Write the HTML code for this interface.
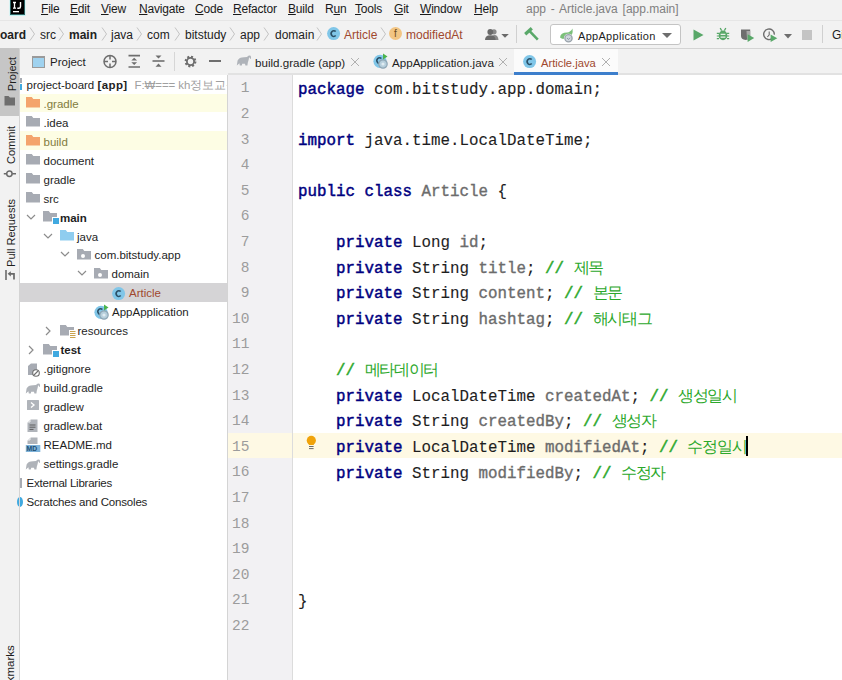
<!DOCTYPE html>
<html><head><meta charset="utf-8">
<style>
*{margin:0;padding:0;box-sizing:border-box}
html,body{width:842px;height:680px;overflow:hidden;background:#fff;font-family:"Liberation Sans",sans-serif;font-size:12px;color:#000}
.a{position:absolute;white-space:nowrap}
#menubar{position:absolute;left:0;top:0;width:842px;height:21px;background:#f2f2f2;border-bottom:1px solid #e6e6e6}
#navbar{position:absolute;left:0;top:21px;width:842px;height:28px;background:#f2f2f2;border-bottom:1px solid #d4d4d4}
#stripe{position:absolute;left:0;top:49px;width:20px;height:631px;background:#f2f2f2;border-right:1px solid #d4d4d4}
#phead{position:absolute;left:20px;top:49px;width:208px;height:26px;background:#f2f2f2}
#tree{position:absolute;left:20px;top:75px;width:208px;height:605px;background:#fff;border-right:1px solid #d4d4d4}
#tabs{position:absolute;left:228px;top:49px;width:614px;height:26px;background:#f2f2f2}
#gutter{position:absolute;left:228px;top:75px;width:65px;height:605px;background:#f2f1f3;border-right:1px solid #dcdcdc}
#editor{position:absolute;left:293px;top:75px;width:549px;height:605px;background:#fff}
#clip{position:absolute;left:0;top:75px;width:227px;height:605px;overflow:hidden}
.mn{font-size:12px;color:#1a1a1a;top:2px;line-height:14px;letter-spacing:-0.2px}
.bc{font-size:12px;color:#222;top:28px;line-height:14px}
.code{position:absolute;left:298px;font-family:"Liberation Mono",monospace;font-size:15.83px;line-height:25.6px;color:#1e1e1e;white-space:pre;-webkit-text-stroke:0.1px currentColor}
.kw{color:#000080;font-weight:normal;-webkit-text-stroke:0.45px #000080}
.gr{color:#6c6c6c;-webkit-text-stroke:0.35px #6c6c6c}
.cm{color:#2ca82c}
.sl{-webkit-text-stroke:0.5px #2ca82c}
.hg{font-size:16px;letter-spacing:-1.3px;-webkit-text-stroke:0}
.ln{position:absolute;left:228px;width:21.5px;text-align:right;font-family:"Liberation Mono",monospace;font-size:14.5px;line-height:25.6px;color:#9c9c9c}
.tr{position:absolute;font-size:11.5px;line-height:19px;color:#1e1e1e;white-space:nowrap}
.tab{position:absolute;top:50px;height:26px;font-size:11.6px;line-height:26px;color:#1e1e1e;white-space:nowrap}
</style></head><body>
<div id="menubar"></div><div id="navbar"></div><div id="stripe"></div><div id="phead"></div><div id="tree"></div><div id="tabs"></div><div id="gutter"></div><div id="editor"></div>
<svg class="a" style="left:9px;top:0" width="17" height="17"><rect x="0.5" y="-1" width="16" height="17" fill="#bff3f3"/><rect x="1" y="-1" width="15" height="16" fill="#2e6464"/><rect x="2" y="0" width="13" height="14" fill="#000"/><path d="M4 2.5 H7 M4 8.2 H7 M5.5 2.5 V8.2" stroke="#fff" stroke-width="1.3"/><path d="M11.5 2 V6.5 Q11.5 8.3 9.8 8.3 H8.3" fill="none" stroke="#fff" stroke-width="1.4"/><rect x="4" y="11" width="6" height="1.3" fill="#fff"/></svg>
<div class="a mn" style="left:41px"><u>F</u>ile</div>
<div class="a mn" style="left:70px"><u>E</u>dit</div>
<div class="a mn" style="left:101px"><u>V</u>iew</div>
<div class="a mn" style="left:139px"><u>N</u>avigate</div>
<div class="a mn" style="left:195px"><u>C</u>ode</div>
<div class="a mn" style="left:233px"><u>R</u>efactor</div>
<div class="a mn" style="left:288px"><u>B</u>uild</div>
<div class="a mn" style="left:325px">R<u>u</u>n</div>
<div class="a mn" style="left:355px"><u>T</u>ools</div>
<div class="a mn" style="left:394px"><u>G</u>it</div>
<div class="a mn" style="left:420px"><u>W</u>indow</div>
<div class="a mn" style="left:474px"><u>H</u>elp</div>
<div class="a mn" style="left:526px;color:#808080;word-spacing:1.5px;letter-spacing:0">app - Article.java [app.main]</div>
<div class="a bc" style="left:0px"><b>oard</b></div>
<svg class="a" style="left:29px;top:26px" width="7" height="16"><path d="M1 1.5 L5.5 8 L1 14.5" fill="none" stroke="#c4c4c4" stroke-width="1"/></svg>
<div class="a bc" style="left:40px">src</div>
<svg class="a" style="left:58px;top:26px" width="7" height="16"><path d="M1 1.5 L5.5 8 L1 14.5" fill="none" stroke="#c4c4c4" stroke-width="1"/></svg>
<div class="a bc" style="left:69px"><b>main</b></div>
<svg class="a" style="left:101px;top:26px" width="7" height="16"><path d="M1 1.5 L5.5 8 L1 14.5" fill="none" stroke="#c4c4c4" stroke-width="1"/></svg>
<div class="a bc" style="left:111px">java</div>
<svg class="a" style="left:136px;top:26px" width="7" height="16"><path d="M1 1.5 L5.5 8 L1 14.5" fill="none" stroke="#c4c4c4" stroke-width="1"/></svg>
<div class="a bc" style="left:147px">com</div>
<svg class="a" style="left:174px;top:26px" width="7" height="16"><path d="M1 1.5 L5.5 8 L1 14.5" fill="none" stroke="#c4c4c4" stroke-width="1"/></svg>
<div class="a bc" style="left:185px">bitstudy</div>
<svg class="a" style="left:229px;top:26px" width="7" height="16"><path d="M1 1.5 L5.5 8 L1 14.5" fill="none" stroke="#c4c4c4" stroke-width="1"/></svg>
<div class="a bc" style="left:240px">app</div>
<svg class="a" style="left:263px;top:26px" width="7" height="16"><path d="M1 1.5 L5.5 8 L1 14.5" fill="none" stroke="#c4c4c4" stroke-width="1"/></svg>
<div class="a bc" style="left:275px">domain</div>
<svg class="a" style="left:316px;top:26px" width="7" height="16"><path d="M1 1.5 L5.5 8 L1 14.5" fill="none" stroke="#c4c4c4" stroke-width="1"/></svg>
<svg class="a" style="left:327px;top:27px" width="14" height="14"><circle cx="6.6" cy="6.6" r="6.5" fill="#80c6e8"/><path d="M8.7 4.6 A2.6 2.9 0 1 0 8.7 8.6" fill="none" stroke="#2b4f66" stroke-width="1.6"/></svg>
<div class="a bc" style="left:344px;color:#a0482e">Article</div>
<svg class="a" style="left:380px;top:26px" width="7" height="16"><path d="M1 1.5 L5.5 8 L1 14.5" fill="none" stroke="#c4c4c4" stroke-width="1"/></svg>
<div class="a" style="left:389px;top:27px;width:13px;height:13px;border-radius:50%;background:#f2c583"></div>
<div class="a" style="left:392px;top:27px;font-size:10px;line-height:13px;color:#6b4b1a;width:7px;text-align:center">f</div>
<div class="a bc" style="left:406px;color:#a0482e">modifiedAt</div>
<svg class="a" style="left:482px;top:26px" width="28" height="16"><circle cx="12" cy="5.8" r="2.6" fill="#8a8a8a"/><path d="M9 14 Q9 9 12.5 9 Q16 9 16.5 14 Z" fill="#8a8a8a"/><circle cx="8.3" cy="6" r="2.9" fill="#6a6a6a"/><path d="M3 14 Q3 9.2 8.3 9.2 Q13.6 9.2 13.6 14 Z" fill="#6a6a6a"/><path d="M19.3 8 L26.8 8 L23 11.8 Z" fill="#6a6a6a"/></svg>
<div class="a" style="left:516px;top:25px;width:1px;height:18px;background:#d0d0d0"></div>
<svg class="a" style="left:522px;top:26px" width="18" height="16"><path d="M3.2 8.2 L9.8 2.2" stroke="#59a869" stroke-width="3.2"/><path d="M7.6 5.2 L15.8 13.6" stroke="#59a869" stroke-width="2.6"/></svg>
<div class="a" style="left:550px;top:24px;width:131px;height:21px;background:#fff;border:1px solid #c4c4c4;border-radius:3px"></div>
<svg class="a" style="left:559px;top:28px" width="17" height="16"><path d="M1 9.5 Q1.5 4.5 8 4.5 Q11.5 4.2 13.5 0.5 Q14.5 7 10 9.5 Q5 12.5 1 9.5 Z" fill="#7cc07a"/><circle cx="9.5" cy="10.3" r="4.6" fill="#fff"/><circle cx="9.5" cy="10.3" r="3.6" fill="#cfd6dd" stroke="#9aa3ab" stroke-width="1.3"/><path d="M8 10 L9.5 11.5 L11 9.8" fill="none" stroke="#8a949c" stroke-width="0.9"/></svg>
<div class="a bc" style="left:578px;top:29px;font-size:11px;letter-spacing:0.3px;color:#1e1e1e">AppApplication</div>
<svg class="a" style="left:662px;top:33px" width="11" height="6"><path d="M0 0 L10 0 L5 5 Z" fill="#6e6e6e"/></svg>
<svg class="a" style="left:693px;top:29px" width="11" height="12"><path d="M0.5 0.5 L10.5 6 L0.5 11.5 Z" fill="#59a869"/></svg>
<svg class="a" style="left:716px;top:27px" width="14" height="14"><path d="M4.2 1 L5.6 3.6 M9.8 1 L8.4 3.6" stroke="#59a869" stroke-width="1.3"/><ellipse cx="7" cy="8.4" rx="4.3" ry="4.9" fill="#59a869"/><path d="M0.8 6.4 H3 M0.8 9 H3 M0.8 11.6 H3 M11 6.4 H13.2 M11 9 H13.2 M11 11.6 H13.2" stroke="#59a869" stroke-width="1.2"/><path d="M4.6 7.3 H9.4 M4.6 10.2 H9.4" stroke="#e6f2e8" stroke-width="1.2"/></svg>
<svg class="a" style="left:740px;top:28px" width="16" height="15"><path d="M1 1.4 L10.2 1.4 L10.2 8 Q10.2 11.3 5.6 12 Q1 11.3 1 8 Z" fill="#6e6e6e"/><path d="M6.5 3 L10.2 3 L10.2 8 Q10.2 10.5 7 11.3 Z" fill="#a8a8a8"/><path d="M7.6 6.2 L14.2 10 L7.6 13.9 Z" fill="#59a869"/></svg>
<svg class="a" style="left:762px;top:28px" width="17" height="15"><path d="M10.5 10.3 A5.3 5.3 0 1 1 12.3 6.6" fill="none" stroke="#6e6e6e" stroke-width="1.4"/><path d="M7.2 3.4 L7.2 6.8 L5.4 9" fill="none" stroke="#6e6e6e" stroke-width="1.1"/><path d="M8.6 6.6 L15.3 10.3 L8.6 14 Z" fill="#59a869"/></svg>
<svg class="a" style="left:784px;top:34px" width="9" height="5"><path d="M0 0 L8 0 L4 4.5 Z" fill="#6e6e6e"/></svg>
<div class="a" style="left:802px;top:30px;width:10px;height:10px;background:#c4c4c4"></div>
<div class="a" style="left:822px;top:25px;width:1px;height:18px;background:#d0d0d0"></div>
<div class="a bc" style="left:832px;color:#1e1e1e">Gi</div>
<div class="a" style="left:0;top:48px;width:19px;height:68px;background:#c6c6c6"></div>
<div class="a" style="left:11.5px;top:74px;width:0;height:0"><div style="position:absolute;left:0;top:0;transform:translate(-50%,-50%) rotate(-90deg);font-size:11px;line-height:12px;color:#1e1e1e;white-space:nowrap">Project</div></div>
<svg class="a" style="left:4px;top:95px" width="12" height="11"><path d="M0.5 1 L4.5 1 L6 2.5 L11 2.5 L11 10.5 L0.5 10.5 Z" fill="#6e6e6e"/></svg>
<div class="a" style="left:11px;top:145px;width:0;height:0"><div style="position:absolute;left:0;top:0;transform:translate(-50%,-50%) rotate(-90deg);font-size:11px;line-height:12px;color:#1e1e1e;white-space:nowrap">Commit</div></div>
<svg class="a" style="left:3px;top:169px" width="14" height="10"><circle cx="6.4" cy="4.8" r="2.7" fill="none" stroke="#6a6a6a" stroke-width="1.5"/><path d="M0.8 4.8 L3.6 4.8 M9.2 4.8 L13 4.8" stroke="#6a6a6a" stroke-width="1.5"/></svg>
<div class="a" style="left:11px;top:232.5px;width:0;height:0"><div style="position:absolute;left:0;top:0;transform:translate(-50%,-50%) rotate(-90deg);font-size:11px;line-height:12px;color:#1e1e1e;white-space:nowrap">Pull Requests</div></div>
<svg class="a" style="left:4px;top:269px" width="12" height="12"><path d="M2 1 L2 11" stroke="#6a6a6a" stroke-width="1.6"/><path d="M5.5 4.8 L10 4.8 L10 10.5" fill="none" stroke="#6a6a6a" stroke-width="1.7"/><path d="M3.6 4.8 L6.8 2.2 L6.8 7.4 Z" fill="#6a6a6a"/></svg>
<div class="a" style="left:10px;top:674px;width:0;height:0"><div style="position:absolute;left:0;top:0;transform:translate(-50%,-50%) rotate(-90deg);font-size:11.5px;line-height:12px;color:#1e1e1e;white-space:nowrap">Bookmarks</div></div>
<div class="a" style="left:32px;top:56px;width:13px;height:12px;border:1px solid #9a9a9a;border-top-width:2px;background:#9fd2ef"></div>
<div class="a" style="left:50px;top:54px;font-size:11.5px;line-height:16px;color:#1e1e1e">Project</div>
<svg class="a" style="left:102px;top:54px" width="16" height="15"><circle cx="8" cy="7.5" r="6" fill="none" stroke="#6e6e6e" stroke-width="1.5"/><path d="M8 1.5 L8 5.5 M8 9.5 L8 13.5 M2 7.5 L6 7.5 M10 7.5 L14 7.5" stroke="#6e6e6e" stroke-width="1.5"/></svg>
<svg class="a" style="left:128px;top:54px" width="13" height="15"><path d="M0.5 1.6 L12 1.6 M0.5 13 L12 13" stroke="#6e6e6e" stroke-width="1.6"/><path d="M3.3 6.6 L6.2 3.8 L9.1 6.6 Z M3.3 8.2 L6.2 11 L9.1 8.2 Z" fill="#6e6e6e"/></svg>
<svg class="a" style="left:152px;top:54px" width="13" height="15"><path d="M0.5 7 L12.5 7" stroke="#6e6e6e" stroke-width="1.6"/><path d="M3.5 1.4 L6.5 4.4 L9.5 1.4 Z M3.5 12.8 L6.5 9.6 L9.5 12.8 Z" fill="#6e6e6e"/></svg>
<div class="a" style="left:174px;top:52px;width:1px;height:19px;background:#d6d6d6"></div>
<svg class="a" style="left:184px;top:55px" width="13" height="13"><circle cx="6.5" cy="6.5" r="4.6" fill="none" stroke="#6e6e6e" stroke-width="2.6" stroke-dasharray="1.9 1.7"/><circle cx="6.5" cy="6.5" r="3.6" fill="none" stroke="#6e6e6e" stroke-width="1.8"/></svg>
<div class="a" style="left:209px;top:60px;width:12px;height:2px;background:#6e6e6e"></div>
<div id="clip"><div style="position:absolute;left:0;top:-75px;width:227px;height:680px">
<div class="a" style="left:20px;top:93.55px;width:207px;height:18.7px;background:#fdfde4"></div>
<div class="a" style="left:20px;top:131.45px;width:207px;height:18.7px;background:#fdfde4"></div>
<div class="a" style="left:20px;top:283.05px;width:207px;height:18.7px;background:#d5d4d6"></div>
<div class="tr" style="left:26.5px;top:75.90px;color:#1e1e1e">project-board <b style="letter-spacing:0.4px">[app]</b><span style="color:#a0a0a0;margin-left:7px;letter-spacing:-0.1px">F:&#8361;=== kh정보교육</span></div>
<div class="tr" style="left:43.5px;top:94.85px;color:#827c40">.gradle</div>
<div class="tr" style="left:43.5px;top:113.80px;color:#1e1e1e">.idea</div>
<div class="tr" style="left:43.5px;top:132.75px;color:#827c40">build</div>
<div class="tr" style="left:43.5px;top:151.70px;color:#1e1e1e">document</div>
<div class="tr" style="left:43.5px;top:170.65px;color:#1e1e1e">gradle</div>
<div class="tr" style="left:43.5px;top:189.60px;color:#1e1e1e">src</div>
<div class="tr" style="left:60px;top:208.55px;color:#1e1e1e"><b>main</b></div>
<div class="tr" style="left:77px;top:227.50px;color:#1e1e1e">java</div>
<div class="tr" style="left:94.5px;top:246.45px;color:#1e1e1e">com.bitstudy.app</div>
<div class="tr" style="left:111.5px;top:265.40px;color:#1e1e1e">domain</div>
<div class="tr" style="left:129px;top:284.35px;color:#a0482e">Article</div>
<div class="tr" style="left:112px;top:303.30px;color:#1e1e1e">AppApplication</div>
<div class="tr" style="left:77.5px;top:322.25px;color:#1e1e1e">resources</div>
<div class="tr" style="left:60.5px;top:341.20px;color:#1e1e1e"><b>test</b></div>
<div class="tr" style="left:43.5px;top:360.15px;color:#1e1e1e">.gitignore</div>
<div class="tr" style="left:43.5px;top:379.10px;color:#1e1e1e">build.gradle</div>
<div class="tr" style="left:43.5px;top:398.05px;color:#1e1e1e">gradlew</div>
<div class="tr" style="left:43.5px;top:417.00px;color:#1e1e1e">gradlew.bat</div>
<div class="tr" style="left:43.5px;top:435.95px;color:#1e1e1e">README.md</div>
<div class="tr" style="left:43.5px;top:454.90px;color:#1e1e1e">settings.gradle</div>
<div class="tr" style="left:26.5px;top:473.85px;color:#1e1e1e"><span style="letter-spacing:-0.22px">External Libraries</span></div>
<div class="tr" style="left:26.5px;top:492.80px;color:#1e1e1e"><span style="letter-spacing:-0.18px">Scratches and Consoles</span></div>
<div class="a" style="left:19px;top:78.4px;width:3px;height:5px;background:#a7abb3"></div><div class="a" style="left:19px;top:84.4px;width:3px;height:6px;background:#40a9e0"></div>
<svg class="a" style="left:26px;top:97.4px" width="15" height="12"><path d="M0 0 L5.8 0 L7.3 2 L14 2 L14 10.5 L0 10.5 Z" fill="#f4a46c"/></svg>
<svg class="a" style="left:26px;top:116.3px" width="15" height="12"><path d="M0 0 L5.8 0 L7.3 2 L14 2 L14 10.5 L0 10.5 Z" fill="#a7abb3"/></svg>
<svg class="a" style="left:26px;top:135.2px" width="15" height="12"><path d="M0 0 L5.8 0 L7.3 2 L14 2 L14 10.5 L0 10.5 Z" fill="#f4a46c"/></svg>
<svg class="a" style="left:26px;top:154.2px" width="15" height="12"><path d="M0 0 L5.8 0 L7.3 2 L14 2 L14 10.5 L0 10.5 Z" fill="#a7abb3"/></svg>
<svg class="a" style="left:26px;top:173.2px" width="15" height="12"><path d="M0 0 L5.8 0 L7.3 2 L14 2 L14 10.5 L0 10.5 Z" fill="#a7abb3"/></svg>
<svg class="a" style="left:26px;top:192.1px" width="15" height="12"><path d="M0 0 L5.8 0 L7.3 2 L14 2 L14 10.5 L0 10.5 Z" fill="#a7abb3"/></svg>
<svg class="a" style="left:26px;top:213.6px" width="10" height="7"><path d="M1 1 L5 5 L9 1" fill="none" stroke="#8c8c8c" stroke-width="1.2"/></svg>
<svg class="a" style="left:43px;top:211.1px" width="15" height="12"><path d="M0 0 L5.8 0 L7.3 2 L14 2 L14 10.5 L0 10.5 Z" fill="#a7abb3"/></svg>
<div class="a" style="left:51.5px;top:217.1px;width:6px;height:6px;background:#40a9e0;border:1px solid #fff;border-right:none;border-bottom:none;box-sizing:content-box"></div>
<svg class="a" style="left:43px;top:232.5px" width="10" height="7"><path d="M1 1 L5 5 L9 1" fill="none" stroke="#8c8c8c" stroke-width="1.2"/></svg>
<svg class="a" style="left:60px;top:230.0px" width="15" height="12"><path d="M0 0 L5.8 0 L7.3 2 L14 2 L14 10.5 L0 10.5 Z" fill="#8fcdef"/></svg>
<svg class="a" style="left:60px;top:251.4px" width="10" height="7"><path d="M1 1 L5 5 L9 1" fill="none" stroke="#8c8c8c" stroke-width="1.2"/></svg>
<svg class="a" style="left:77px;top:248.9px" width="15" height="12"><path d="M0 0 L5.8 0 L7.3 2 L14 2 L14 10.5 L0 10.5 Z" fill="#a7abb3"/></svg>
<div class="a" style="left:81px;top:253.8px;width:4px;height:4px;background:#fff;border-radius:50%"></div>
<svg class="a" style="left:77px;top:270.4px" width="10" height="7"><path d="M1 1 L5 5 L9 1" fill="none" stroke="#8c8c8c" stroke-width="1.2"/></svg>
<svg class="a" style="left:94px;top:267.9px" width="15" height="12"><path d="M0 0 L5.8 0 L7.3 2 L14 2 L14 10.5 L0 10.5 Z" fill="#a7abb3"/></svg>
<div class="a" style="left:98px;top:272.7px;width:4px;height:4px;background:#fff;border-radius:50%"></div>
<svg class="a" style="left:112px;top:286.9px" width="14" height="14"><circle cx="6.6" cy="6.6" r="6.5" fill="#80c6e8"/><path d="M8.7 4.6 A2.6 2.9 0 1 0 8.7 8.6" fill="none" stroke="#2b4f66" stroke-width="1.6"/></svg>
<svg class="a" style="left:94px;top:303.8px" width="16" height="16"><circle cx="7" cy="8.3" r="6.6" fill="#80c6e8"/><path d="M8.4 5.6 A2.6 2.9 0 1 0 8.4 9.6" fill="none" stroke="#2b4f66" stroke-width="1.5"/><circle cx="10" cy="11" r="4.2" fill="#b6cfdc" stroke="#8fa6b5" stroke-width="1.2"/><circle cx="10" cy="11" r="1.6" fill="#e0ecf2"/><path d="M10 0.5 L14.5 3.5 L10 6.5 Z" fill="#4bb34b"/></svg>
<svg class="a" style="left:45px;top:325.8px" width="7" height="10"><path d="M1 1 L5 5 L1 9" fill="none" stroke="#8c8c8c" stroke-width="1.2"/></svg>
<svg class="a" style="left:60px;top:324.8px" width="15" height="12"><path d="M0 0 L5.8 0 L7.3 2 L14 2 L14 10.5 L0 10.5 Z" fill="#a7abb3"/></svg>
<svg class="a" style="left:69px;top:329.8px" width="7" height="8"><rect x="0" y="0" width="7" height="8" fill="#fff"/><path d="M1 1.5 H6.5 M1 3.5 H6.5 M1 5.5 H6.5 M1 7.5 H6.5" stroke="#c9a34f" stroke-width="1"/></svg>
<svg class="a" style="left:28px;top:344.7px" width="7" height="10"><path d="M1 1 L5 5 L1 9" fill="none" stroke="#8c8c8c" stroke-width="1.2"/></svg>
<svg class="a" style="left:43px;top:343.7px" width="15" height="12"><path d="M0 0 L5.8 0 L7.3 2 L14 2 L14 10.5 L0 10.5 Z" fill="#a7abb3"/></svg>
<div class="a" style="left:51.5px;top:349.7px;width:6px;height:6px;background:#40a9e0;border:1px solid #fff;border-right:none;border-bottom:none;box-sizing:content-box"></div>
<svg class="a" style="left:27px;top:362.6px" width="14" height="14"><path d="M1 3 L4 0.5 L10 0.5 L10 12 L1 12 Z" fill="#a7abb3"/><circle cx="9" cy="10" r="3.3" fill="#fff" stroke="#6e6e6e" stroke-width="1.1"/><path d="M7 12 L11 8" stroke="#6e6e6e" stroke-width="1.1"/></svg>
<svg class="a" style="left:25px;top:383.1px" width="16" height="12"><path d="M0.8 10.5 L1.6 5.5 Q3 2.3 8 2.2 L11 2 Q12.6 0.3 14.2 0.6 Q15.5 1.3 15 3.8 L14 3.8 Q14 2.2 13.1 2.6 L12.6 5 L11.8 7.8 L11.4 10.5 L9.4 10.5 L9 8.8 L6.2 8.8 L5.8 10.5 L3.8 10.5 L3.4 8.3 Z" fill="#afb3b9"/></svg>
<svg class="a" style="left:27px;top:400.0px" width="13" height="12"><rect x="0" y="0" width="12" height="10" rx="0.5" fill="#b0b4ba"/><path d="M4 2.6 L7 5 L4 7.4" fill="none" stroke="#fff" stroke-width="1.3"/></svg>
<svg class="a" style="left:27px;top:419.0px" width="12" height="14"><path d="M0.5 3.5 L3.5 0.5 L10.5 0.5 L10.5 13 L0.5 13 Z" fill="#b0b4ba"/><path d="M0 3 L3 3 L3 0" fill="none" stroke="#fff" stroke-width="0.8"/><path d="M2.5 6 H8.5 M2.5 8.2 H8.5 M2.5 10.4 H6.5" stroke="#5f5f5f" stroke-width="1"/></svg>
<svg class="a" style="left:25px;top:437.0px" width="16" height="16"><path d="M2.5 3.5 L5.5 0.5 L12.5 0.5 L12.5 7 L2.5 7 Z" fill="#b0b4ba"/><path d="M2 3 L5 3 L5 0" fill="none" stroke="#fff" stroke-width="0.8"/><rect x="0.8" y="8" width="14.5" height="7" fill="#7fb3d9"/><text x="1.6" y="14.2" font-size="6.8" font-weight="bold" fill="#214f73" font-family="Liberation Sans">MD</text></svg>
<svg class="a" style="left:25px;top:458.9px" width="16" height="12"><path d="M0.8 10.5 L1.6 5.5 Q3 2.3 8 2.2 L11 2 Q12.6 0.3 14.2 0.6 Q15.5 1.3 15 3.8 L14 3.8 Q14 2.2 13.1 2.6 L12.6 5 L11.8 7.8 L11.4 10.5 L9.4 10.5 L9 8.8 L6.2 8.8 L5.8 10.5 L3.8 10.5 L3.4 8.3 Z" fill="#afb3b9"/></svg>
<div class="a" style="left:20px;top:478.4px;width:2px;height:10px;background:#a7abb3"></div>
<div class="a" style="left:17px;top:497.3px;width:6px;height:10px;border-radius:50%;background:#40a9e0"></div>
</div></div>
<div class="a" style="left:19px;top:49px;width:1px;height:631px;background:#d4d4d4"></div>
<svg class="a" style="left:236px;top:55.0px" width="16" height="12"><path d="M0.8 10.5 L1.6 5.5 Q3 2.3 8 2.2 L11 2 Q12.6 0.3 14.2 0.6 Q15.5 1.3 15 3.8 L14 3.8 Q14 2.2 13.1 2.6 L12.6 5 L11.8 7.8 L11.4 10.5 L9.4 10.5 L9 8.8 L6.2 8.8 L5.8 10.5 L3.8 10.5 L3.4 8.3 Z" fill="#afb3b9"/></svg>
<div class="tab" style="left:255px">build.gradle (app)</div>
<svg class="a" style="left:350px;top:57px" width="10" height="10"><path d="M1 1 L9 9 M9 1 L1 9" stroke="#b0b0b0" stroke-width="1"/></svg>
<svg class="a" style="left:373px;top:53.0px" width="16" height="16"><circle cx="7" cy="8.3" r="6.6" fill="#80c6e8"/><path d="M8.4 5.6 A2.6 2.9 0 1 0 8.4 9.6" fill="none" stroke="#2b4f66" stroke-width="1.5"/><circle cx="10" cy="11" r="4.2" fill="#b6cfdc" stroke="#8fa6b5" stroke-width="1.2"/><circle cx="10" cy="11" r="1.6" fill="#e0ecf2"/><path d="M10 0.5 L14.5 3.5 L10 6.5 Z" fill="#4bb34b"/></svg>
<div class="tab" style="left:392px">AppApplication.java</div>
<svg class="a" style="left:498px;top:57px" width="10" height="10"><path d="M1 1 L9 9 M9 1 L1 9" stroke="#b0b0b0" stroke-width="1"/></svg>
<div class="a" style="left:228px;top:73px;width:614px;height:1.5px;background:#e2e2e2"></div>
<div class="a" style="left:514px;top:49px;width:104px;height:24px;background:#fbfbfb"></div>
<div class="a" style="left:514px;top:72px;width:104px;height:2.5px;background:#3d7fcc"></div>
<svg class="a" style="left:523px;top:55px" width="14" height="14"><circle cx="6.6" cy="6.6" r="6.5" fill="#80c6e8"/><path d="M8.7 4.6 A2.6 2.9 0 1 0 8.7 8.6" fill="none" stroke="#2b4f66" stroke-width="1.6"/></svg>
<div class="tab" style="left:541px;color:#a0482e;font-size:11.2px">Article.java</div>
<svg class="a" style="left:601px;top:57px" width="10" height="10"><path d="M1 1 L9 9 M9 1 L1 9" stroke="#b0b0b0" stroke-width="1"/></svg>
<div class="a" style="left:228px;top:432.5px;width:64px;height:25px;background:#fef9e4"></div>
<div class="a" style="left:293px;top:432.5px;width:549px;height:25px;background:#fef9e4"></div>
<div class="ln" style="top:76.30px">1</div>
<div class="ln" style="top:101.90px">2</div>
<div class="ln" style="top:127.50px">3</div>
<div class="ln" style="top:153.10px">4</div>
<div class="ln" style="top:178.70px">5</div>
<div class="ln" style="top:204.30px">6</div>
<div class="ln" style="top:229.90px">7</div>
<div class="ln" style="top:255.50px">8</div>
<div class="ln" style="top:281.10px">9</div>
<div class="ln" style="top:306.70px">10</div>
<div class="ln" style="top:332.30px">11</div>
<div class="ln" style="top:357.90px">12</div>
<div class="ln" style="top:383.50px">13</div>
<div class="ln" style="top:409.10px">14</div>
<div class="ln" style="top:434.70px">15</div>
<div class="ln" style="top:460.30px">16</div>
<div class="ln" style="top:485.90px">17</div>
<div class="ln" style="top:511.50px">18</div>
<div class="ln" style="top:537.10px">19</div>
<div class="ln" style="top:562.70px">20</div>
<div class="ln" style="top:588.30px">21</div>
<div class="ln" style="top:613.90px">22</div>
<div class="code" style="top:77.60px"><span class="kw">package</span> com.bitstudy.app.domain;</div>
<div class="code" style="top:128.80px"><span class="kw">import</span> java.time.LocalDateTime;</div>
<div class="code" style="top:180.00px"><span class="kw">public</span> <span class="kw">class</span> <span class="gr">Article</span> {</div>
<div class="code" style="top:231.20px">    <span class="kw">private</span> Long <span class="gr">id</span>;</div>
<div class="code" style="top:256.80px">    <span class="kw">private</span> String <span class="gr">title</span>; <span class="cm"><span class="sl">//</span> <span class="hg">제목</span></span></div>
<div class="code" style="top:282.40px">    <span class="kw">private</span> String <span class="gr">content</span>; <span class="cm"><span class="sl">//</span> <span class="hg">본문</span></span></div>
<div class="code" style="top:308.00px">    <span class="kw">private</span> String <span class="gr">hashtag</span>; <span class="cm"><span class="sl">//</span> <span class="hg">해시태그</span></span></div>
<div class="code" style="top:359.20px">    <span class="cm"><span class="sl">//</span> <span class="hg">메타데이터</span></span></div>
<div class="code" style="top:384.80px">    <span class="kw">private</span> LocalDateTime <span class="gr">createdAt</span>; <span class="cm"><span class="sl">//</span> <span class="hg">생성일시</span></span></div>
<div class="code" style="top:410.40px">    <span class="kw">private</span> String <span class="gr">createdBy</span>; <span class="cm"><span class="sl">//</span> <span class="hg">생성자</span></span></div>
<div class="code" style="top:436.00px">    <span class="kw">private</span> LocalDateTime <span class="gr">modifiedAt</span>; <span class="cm"><span class="sl">//</span> <span class="hg">수정일시</span></span></div>
<div class="code" style="top:461.60px">    <span class="kw">private</span> String <span class="gr">modifiedBy</span>; <span class="cm"><span class="sl">//</span> <span class="hg">수정자</span></span></div>
<div class="code" style="top:589.60px">}</div>
<div class="a" style="left:746px;top:436px;width:1.8px;height:19.5px;background:#000"></div>
<svg class="a" style="left:305px;top:435px" width="12" height="16"><circle cx="6.3" cy="5.4" r="4.6" fill="#f0a30a"/><rect x="3.8" y="7" width="5" height="3" fill="#f0a30a"/><path d="M4 11.5 H8.6 M4 13.6 H8.6" stroke="#5a5a5a" stroke-width="0.9"/></svg>
</body></html>
